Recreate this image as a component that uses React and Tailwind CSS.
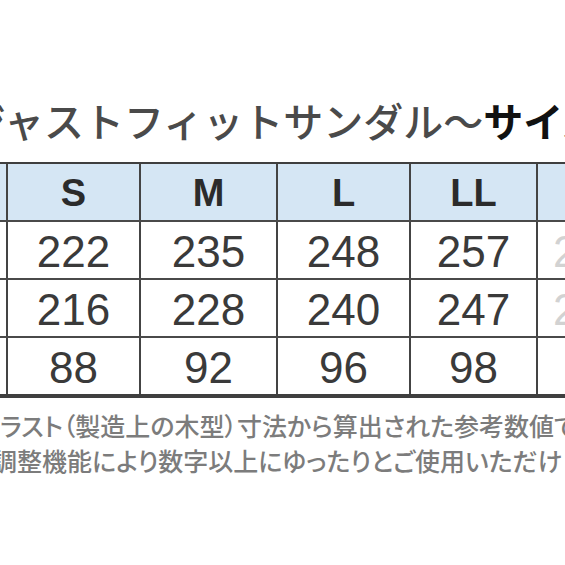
// App.jsx
const jp = { fontFamily: '"Noto Sans CJK JP", "Noto Sans", sans-serif' };

const header = ['S', 'M', 'L', 'LL'];
const rows = [
    ['222', '235', '248', '257', '266'],
    ['216', '228', '240', '247', '256'],
    ['88', '92', '96', '98', ''],
];

// column widths incl. the 2px left border
const colW = ['w-[133px]', 'w-[137px]', 'w-[133px]', 'w-[127px]'];

function Row({ cells, isHeader, last }) {
    return (
        <div
            className={`flex ${last ? 'h-[56px]' : 'h-[58px] border-b-2 border-[#4a4a4a]'} ${isHeader ? 'bg-[#d5e6f4]' : 'bg-white'}`}
        >
            <div className="w-[6px] shrink-0" />
            {cells.slice(0, 4).map((c, i) => (
                <div
                    key={i}
                    className={`${colW[i]} shrink-0 border-l-2 border-[#444] flex items-center justify-center ${isHeader ? 'pt-[2px] text-[38px] font-bold text-[#2b2b2b]' : 'pt-[4px] text-[44px] text-[#3a3a3a]'}`}
                >
                    {c}
                </div>
            ))}
            <div className="flex-1 border-l-2 border-[#444] flex items-center pl-[15px] pt-[4px] text-[44px] text-[#d2d2d2] overflow-hidden whitespace-nowrap">
                {isHeader ? '' : cells[4]}
            </div>
        </div>
    );
}

export default function App() {
    return (
        <div className="w-[565px] h-[565px] overflow-hidden bg-white" style={{ fontFamily: '"Liberation Sans", Arial, sans-serif' }}>
            {/* title */}
            <div
                className="mt-[100px] ml-[-34px] h-[40px] leading-[40px] text-[40px] whitespace-nowrap"
                style={jp}
            >
                <span className="font-medium text-[#4a4a4a]">ジャストフィットサンダル〜</span>
                <span className="font-bold text-[#111]">サイズ表</span>
            </div>

            {/* size table */}
            <div className="mt-[22px] border-t-2 border-b-[4px] border-[#3f3f3f]">
                <Row cells={header} isHeader />
                {rows.map((r, i) => (
                    <Row key={i} cells={r} last={i === rows.length - 1} />
                ))}
            </div>

            {/* notes */}
            <div
                className="mt-[10px] text-[25px] leading-[35px] font-medium text-[#7c7c7c] whitespace-nowrap [font-feature-settings:'palt']"
                style={jp}
            >
                <p>ラスト（製造上の木型）寸法から算出された参考数値です。</p>
                <p className="ml-[-8px]">調整機能により数字以上にゆったりとご使用いただけます。</p>
            </div>
        </div>
    );
}
